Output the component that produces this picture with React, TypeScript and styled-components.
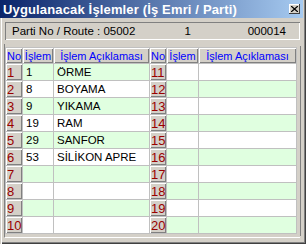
import styled, { createGlobalStyle } from "styled-components";

const GlobalStyle = createGlobalStyle`
  html, body {
    margin: 0;
    padding: 0;
    background: #d4d0c8;
  }
  * {
    box-sizing: border-box;
  }
`;

const Window = styled.div`
  width: 306px;
  height: 244px;
  background: #d4d0c8;
  font-family: "Liberation Sans", Arial, sans-serif;
  display: flex;
  flex-direction: column;
  box-shadow: inset 1px 0 #d4d0c8, inset 2px 0 #ffffff, inset -1px -1px #404040,
    inset -2px -2px #808080;
  overflow: hidden;
`;

const TitleBar = styled.div`
  height: 18px;
  margin-right: 3px;
  display: flex;
  align-items: center;
  justify-content: space-between;
  padding: 0 3px 0 3px;
  background: linear-gradient(to right, #0a246a, #a6caf0);
`;

const Title = styled.span`
  color: #ffffff;
  font-weight: 700;
  font-size: 13px;
  letter-spacing: 0.15px;
  white-space: nowrap;
`;

const CloseButton = styled.div`
  width: 11px;
  height: 10px;
  background: #d4d0c8;
  box-shadow: inset -1px -1px #404040, inset 1px 1px #ffffff;
  display: flex;
  align-items: center;
  justify-content: center;
`;

const Body = styled.div`
  flex: 1;
  display: flex;
  flex-direction: column;
  padding: 4px 5px 0 5px;
`;

const InfoBox = styled.div`
  height: 18px;
  width: 295px;
  display: grid;
  grid-template-columns: 1fr 40px 100px;
  align-items: center;
  font-size: 11.5px;
  color: #000;
  box-shadow: inset 1px 1px #808080, inset -1px -1px #ffffff;
`;

const InfoText = styled.span<{ $align?: string; $pad?: number }>`
  text-align: ${(p) => p.$align || "left"};
  padding-left: ${(p) => (p.$align ? 0 : p.$pad ?? 7)}px;
  padding-right: ${(p) => (p.$align ? p.$pad ?? 0 : 0)}px;
  white-space: nowrap;
`;

const GridFrame = styled.div`
  margin: 4px 0 0 -1px;
  width: 296px;
  padding: 3px 3px 3px 0;
  border-left: 1px solid #808080;
  border-bottom: 1px solid #ffffff;
  box-shadow: 3px 0 0 -2px #808080;
`;

const Grid = styled.div`
  display: grid;
  grid-template-columns: 16px 30px 95px 16px 31px 97px;
  grid-auto-rows: 16px;
  grid-template-rows: 15px;
  gap: 1px;
  width: 292px;
  background: #c0c0c0;
  border: 1px solid #c0c0c0;
  font-size: 11.5px;
`;

const HeaderCell = styled.div`
  background: #d4d0c8;
  color: #0000ff;
  font-size: 11px;
  display: flex;
  align-items: center;
  justify-content: center;
  white-space: nowrap;
  overflow: hidden;
  box-shadow: inset 1px 1px #ffffff, inset -1px -1px #808080;
`;

const NumCell = styled.div`
  background: #d4d0c8;
  color: #990000;
  font-size: 13px;
  display: flex;
  align-items: center;
  padding-left: 1px;
  overflow: hidden;
  box-shadow: inset 1px 1px #ffffff, inset -1px -1px #808080;
`;

const DataCell = styled.div<{ $green: boolean }>`
  background: ${(p) => (p.$green ? "#e0ffe0" : "#ffffff")};
  color: #000;
  display: flex;
  align-items: center;
  padding-left: 3px;
  white-space: nowrap;
  overflow: hidden;
`;

const operations: { code: string; name: string }[] = [
  { code: "1", name: "ÖRME" },
  { code: "8", name: "BOYAMA" },
  { code: "9", name: "YIKAMA" },
  { code: "19", name: "RAM" },
  { code: "29", name: "SANFOR" },
  { code: "53", name: "SİLİKON APRE" },
];

function CloseIcon() {
  return (
    <svg width="7" height="6" viewBox="0 0 7 6">
      <path d="M0 0 L7 6 M7 0 L0 6" stroke="#000" strokeWidth="1.3" />
    </svg>
  );
}

export default function App() {
  const rows = Array.from({ length: 10 }, (_, i) => i);

  return (
    <Window>
      <GlobalStyle />
      <TitleBar>
        <Title>Uygulanacak İşlemler (İş Emri / Parti)</Title>
        <CloseButton>
          <CloseIcon />
        </CloseButton>
      </TitleBar>
      <Body>
        <InfoBox>
          <InfoText>Parti No / Route : 05002</InfoText>
          <InfoText $align="right" $pad={9}>
            1
          </InfoText>
          <InfoText $align="right" $pad={14}>
            000014
          </InfoText>
        </InfoBox>
        <GridFrame>
          <Grid>
            <HeaderCell>No</HeaderCell>
            <HeaderCell>İşlem</HeaderCell>
            <HeaderCell>İşlem Açıklaması</HeaderCell>
            <HeaderCell>No</HeaderCell>
            <HeaderCell>İşlem</HeaderCell>
            <HeaderCell>İşlem Açıklaması</HeaderCell>
            {rows.map((i) => {
              const left = operations[i];
              const leftGreen = i % 2 === 0;
              return [
                <NumCell key={`n${i}`}>{i + 1}</NumCell>,
                <DataCell key={`c${i}`} $green={leftGreen}>
                  {left?.code}
                </DataCell>,
                <DataCell key={`d${i}`} $green={leftGreen}>
                  {left?.name}
                </DataCell>,
                <NumCell key={`n2${i}`}>{i + 11}</NumCell>,
                <DataCell key={`c2${i}`} $green={!leftGreen} />,
                <DataCell key={`d2${i}`} $green={!leftGreen} />,
              ];
            })}
          </Grid>
        </GridFrame>
      </Body>
    </Window>
  );
}
